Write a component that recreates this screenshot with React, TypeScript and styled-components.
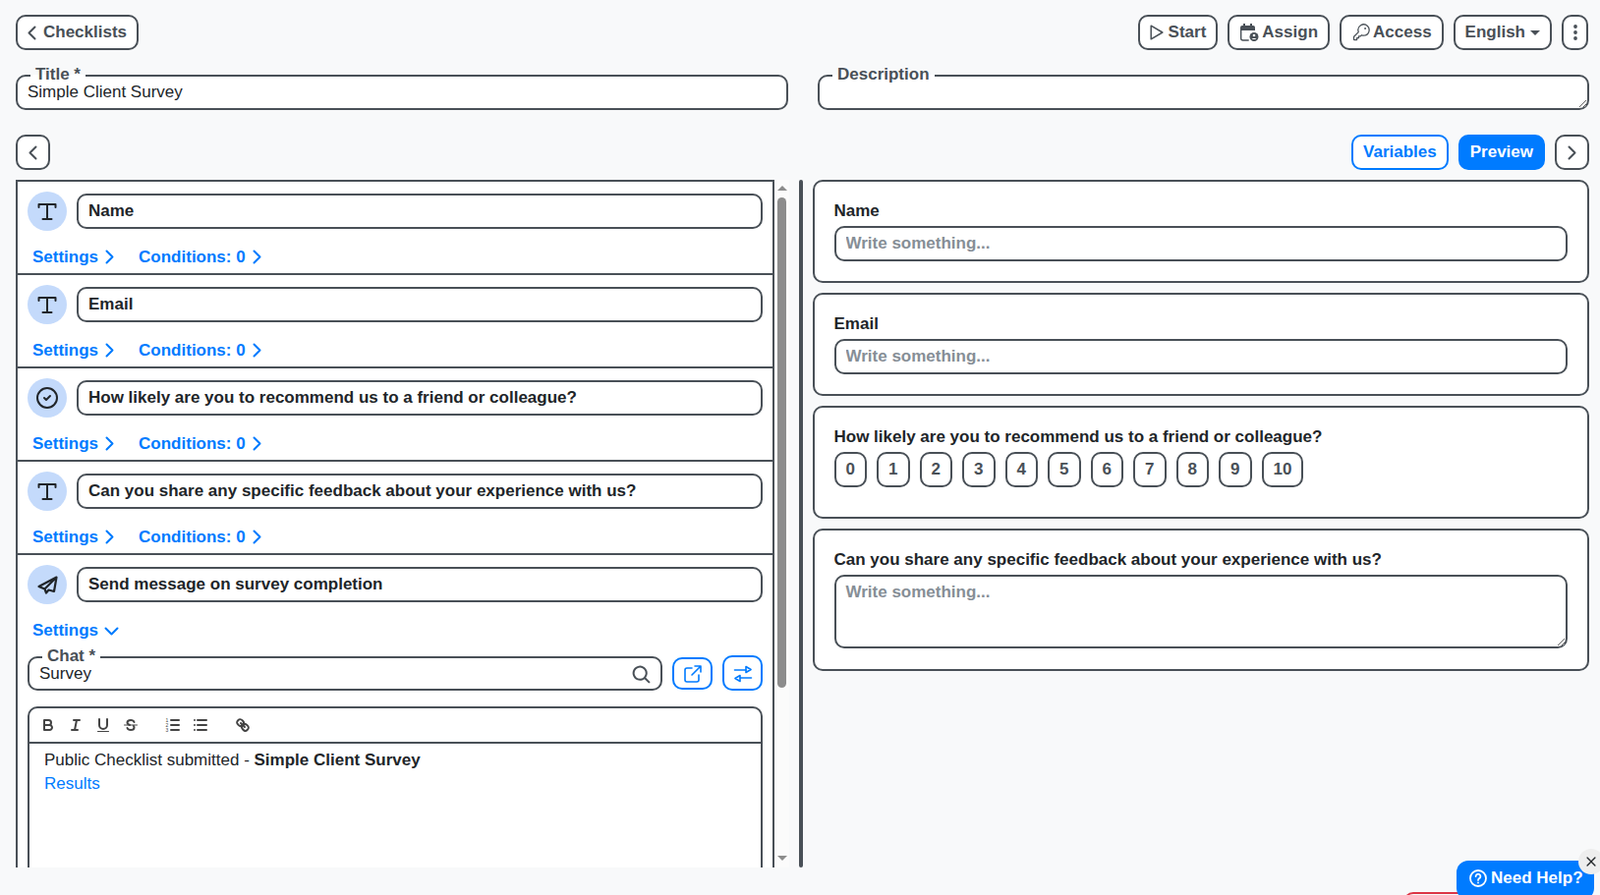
import React from 'react';
import styled, { createGlobalStyle } from 'styled-components';
import { LuCircleCheck } from 'react-icons/lu';
import { PiKey, PiMagnifyingGlassBold, PiXBold } from 'react-icons/pi';

const GRAY = '#495057';
const BLUE = '#007bff';
const INK = '#212529';

const GlobalStyle = createGlobalStyle`
  html, body { margin: 0; padding: 0; height: 100%; overflow: hidden; }
  body {
    background: #f8f9fa;
    color: ${INK};
    font-family: "Liberation Sans", Arial, sans-serif;
    font-size: 17px;
    line-height: 25.5px;
  }
  * { box-sizing: border-box; }
`;

const Page = styled.div`
  height: 911px;
  padding: 15px 11px 28px 16px;
  display: flex;
  flex-direction: column;
  overflow: hidden;
`;

const TopBar = styled.div`
  display: flex;
  justify-content: space-between;
  height: 36px;
  margin-right: 1px;
`;

const ButtonGroup = styled.div`
  display: flex;
  gap: 10px;
`;

const Button = styled.button<{ $variant?: 'outline' | 'solid' }>`
  height: 36px;
  padding: 0 10px;
  display: inline-flex;
  align-items: center;
  gap: 6px;
  border-radius: 10px;
  font: bold 17px/25.5px "Liberation Sans", Arial, sans-serif;
  white-space: nowrap;
  border: 2px solid ${(p) => (p.$variant ? BLUE : GRAY)};
  color: ${(p) => (p.$variant === 'solid' ? '#fff' : p.$variant ? BLUE : GRAY)};
  background: ${(p) => (p.$variant === 'solid' ? BLUE : '#fff')};
`;

const BackButton = styled(Button)`
  gap: 7px;
`;

const StartButton = styled(Button)`
  gap: 5px;
`;

const AccessButton = styled(Button)`
  gap: 2px;
`;

const SquareButton = styled(Button)`
  width: 35px;
  padding: 0;
  justify-content: center;
`;

const MenuButton = styled(SquareButton)`
  width: 27px;
`;

const Caret = styled.span`
  width: 0;
  height: 0;
  margin-left: -1px;
  border-left: 5px solid transparent;
  border-right: 5px solid transparent;
  border-top: 5px solid ${GRAY};
`;

const TitleRow = styled.div`
  display: grid;
  grid-template-columns: 786px 785px;
  column-gap: 30px;
  margin-top: 14px;
`;

const Field = styled.fieldset`
  margin: 0;
  padding: 0;
  min-width: 0;
  border: 2px solid ${GRAY};
  border-radius: 10px;
  background: #fff;
  height: 47px;
  display: block;
`;

const FieldLegend = styled.legend`
  margin: 0 0 -11px 13px;
  padding: 0 5px;
  height: 24px;
  font-weight: bold;
  font-size: 17px;
  line-height: 22px;
  color: ${GRAY};
`;

const FieldInput = styled.input`
  display: block;
  width: 100%;
  height: 32px;
  padding: 0 10px;
  border: 0;
  outline: 0;
  background: transparent;
  font: 17px "Liberation Sans", Arial, sans-serif;
  color: ${INK};
`;

const FieldArea = styled.textarea`
  display: block;
  width: 100%;
  height: 32px;
  min-height: 32px;
  padding: 0 10px;
  border: 0;
  outline: 0;
  border-radius: 8px;
  background: transparent;
  font: 17px "Liberation Sans", Arial, sans-serif;
`;

const ToolRow = styled.div`
  display: flex;
  justify-content: space-between;
  margin-top: 25px;
  height: 36px;
`;

const Main = styled.div`
  margin-top: 10px;
  flex: 1;
  min-height: 0;
  display: flex;
`;

const ListPane = styled.div`
  width: 787px;
  flex: none;
  height: 100%;
  display: flex;
`;

const ListClip = styled.div`
  flex: 1;
  min-width: 0;
  overflow: hidden;
`;

const ScrollRail = styled.div`
  width: 15px;
  flex: none;
  background: #fbfbfb;
  display: flex;
  flex-direction: column;
  align-items: center;
  padding: 6px 0 7px;
`;

const RailArrow = styled.div<{ $down?: boolean }>`
  width: 0;
  height: 0;
  flex: none;
  border-left: 5px solid transparent;
  border-right: 5px solid transparent;
  border-${(p) => (p.$down ? 'top' : 'bottom')}: 5px solid #8c8c8c;
  ${(p) => (p.$down ? 'margin-top: auto;' : '')}
`;

const RailThumb = styled.div`
  width: 9px;
  height: 499px;
  flex: none;
  margin-top: 7px;
  background: #8c8c8c;
  border-radius: 5px;
`;

const List = styled.div`
  border: 2px solid ${GRAY};
  background: #fff;
`;

const Row = styled.div`
  padding: 10px 10px 0;
  height: 95px;
  border-bottom: 2px solid ${GRAY};
  &:last-child {
    border-bottom: 0;
    height: auto;
    padding-bottom: 0;
  }
`;

const RowHead = styled.div`
  display: flex;
  align-items: center;
  gap: 10px;
`;

const Bubble = styled.div`
  width: 40px;
  height: 40px;
  flex: none;
  border-radius: 50%;
  background: #c4dafb;
  color: ${INK};
  display: flex;
  align-items: center;
  justify-content: center;
`;

const QuestionInput = styled.input`
  flex: 1;
  min-width: 0;
  height: 36px;
  padding: 0 10px;
  border: 2px solid ${GRAY};
  border-radius: 10px;
  background: #fff;
  outline: 0;
  font: bold 17px "Liberation Sans", Arial, sans-serif;
  color: ${INK};
`;

const LinkRow = styled.div`
  display: flex;
  gap: 25px;
  margin-top: 14px;
  padding-left: 5px;
  color: ${BLUE};
  font-weight: bold;
`;

const LinkItem = styled.span`
  display: inline-flex;
  align-items: center;
  gap: 7px;
`;

const ChatRow = styled.div`
  display: flex;
  align-items: flex-end;
  gap: 10px;
  margin-top: 2px;
`;

const ChatField = styled(Field)`
  flex: 1;
  height: 46px;
  position: relative;
`;

const SearchIcon = styled.span`
  position: absolute;
  right: 9px;
  top: 6px;
  color: ${GRAY};
  font-size: 21px;
  line-height: 1;
`;

const IconButton = styled(Button)`
  width: 41px;
  padding: 2px 0 0;
  justify-content: center;
  flex: none;
`;

const ShortIconButton = styled(IconButton)`
  height: 33px;
  margin-bottom: 1px;
  padding-top: 1px;
`;

const Editor = styled.div`
  margin: 16px 0 10px;
  border: 2px solid ${GRAY};
  border-radius: 10px;
  height: 390px;
`;

const EditorBar = styled.div`
  height: 36px;
  border-bottom: 2px solid ${GRAY};
  padding-left: 10px;
  display: flex;
  align-items: center;
`;

const EditorIcon = styled.svg<{ $gap?: number }>`
  width: 18px;
  height: 18px;
  margin-right: ${(p) => p.$gap ?? 10}px;
  fill: none;
  stroke: #444;
  stroke-width: 2;
  stroke-linecap: round;
  stroke-linejoin: round;
  flex: none;
`;

const EditorBody = styled.div`
  padding: 5px 15px;
  line-height: 24px;
  a { color: ${BLUE}; text-decoration: none; }
`;

const Divider = styled.div`
  width: 4px;
  flex: none;
  margin: 0 9.5px 0 10px;
  background: ${GRAY};
  border-radius: 2px;
`;

const Preview = styled.div`
  flex: 1;
  min-width: 0;
  display: flex;
  flex-direction: column;
  gap: 10px;
`;

const Card = styled.div<{ $pad?: number }>`
  border: 2px solid ${GRAY};
  border-radius: 10px;
  background: #fff;
  padding: 17px 20px ${(p) => p.$pad ?? 20}px;
`;

const CardLabel = styled.div`
  font-weight: bold;
  margin-bottom: 2.5px;
`;

const PreviewInput = styled.input`
  display: block;
  width: 100%;
  height: 36px;
  padding: 0 10px;
  border: 2px solid ${GRAY};
  border-radius: 10px;
  outline: 0;
  background: #fff;
  font: bold 17px "Liberation Sans", Arial, sans-serif;
  &::placeholder { color: #868e96; opacity: 1; }
`;

const PreviewArea = styled.textarea`
  display: block;
  width: 100%;
  height: 75px;
  padding: 6px 10px;
  border: 2px solid ${GRAY};
  border-radius: 10px;
  outline: 0;
  background: #fff;
  font: bold 17px "Liberation Sans", Arial, sans-serif;
  &::placeholder { color: #868e96; opacity: 1; }
`;

const Scale = styled.div`
  display: flex;
  gap: 10px;
  margin-bottom: 10px;
`;

const ScaleButton = styled(Button)`
  min-width: 33.5px;
  padding: 0 10px;
  justify-content: center;
`;

const HelpWrap = styled.div`
  position: fixed;
  left: 1482px;
  top: 876px;
  width: 140px;
  height: 40px;
  padding: 0 0 5px 13px;
  border-radius: 12px;
  background: ${BLUE};
  color: #fff;
  display: flex;
  align-items: center;
  gap: 4px;
  font: bold 17px "Liberation Sans", Arial, sans-serif;
`;

const HelpClose = styled.span`
  position: fixed;
  left: 1606px;
  top: 864px;
  width: 26px;
  height: 26px;
  border-radius: 50%;
  background: #eeeeee;
  color: ${INK};
  display: flex;
  align-items: center;
  justify-content: center;
  font-size: 14px;
`;

const RedTab = styled.div`
  position: fixed;
  left: 1428px;
  top: 908px;
  width: 70px;
  height: 20px;
  border: 2px solid #dc3545;
  border-radius: 10px;
`;

const DownSvg = styled.svg`
  margin: 2px 0 0 -1px;
`;

const AssignSvg = styled.svg`
  margin-right: -3px;
`;

const Chevron = ({ dir }: { dir: 'left' | 'right' | 'down' }) => {
  if (dir === 'down') {
    return (
      <DownSvg width="15" height="9" viewBox="0 0 15 9" fill="none" stroke="currentColor" strokeWidth="2" strokeLinecap="round" strokeLinejoin="round">
        <path d="M1.5 1.5 7.5 7.5 13.5 1.5" />
      </DownSvg>
    );
  }
  return (
    <svg width="9" height="15" viewBox="0 0 9 15" fill="none" stroke="currentColor" strokeWidth="2" strokeLinecap="round" strokeLinejoin="round">
      <path d={dir === 'left' ? 'M7.5 1.5 1.5 7.5 7.5 13.5' : 'M1.5 1.5 7.5 7.5 1.5 13.5'} />
    </svg>
  );
};

const PlayIcon = () => (
  <svg width="14" height="16" viewBox="0 0 14 16" fill="none" stroke="currentColor" strokeWidth="1.5" strokeLinejoin="round">
    <path d="M1.2 1.2 12.8 8 1.2 14.8z" />
  </svg>
);

const TextIcon = () => (
  <svg width="20" height="19" viewBox="0 0 20 19" fill="none" stroke="currentColor" strokeWidth="2" strokeLinecap="round" strokeLinejoin="round">
    <path d="M1.5 5V2H18.5V5M10 2V17M5.5 17H14.5" />
  </svg>
);

const PlaneIcon = () => (
  <svg width="21" height="19" viewBox="0 0 21 19" fill="none" stroke="currentColor" strokeWidth="2.2" strokeLinejoin="round">
    <path d="M19.5 1.5 1.5 11 7.5 13.5 9 17.5 11.5 14.5 17 16zM19.5 1.5 7.5 13.5" />
  </svg>
);

const AssignIcon = () => (
  <AssignSvg width="20" height="20" viewBox="0 0 20 20" fill="none">
    <path d="M5 1v4M12 1v4" stroke="currentColor" strokeWidth="2" />
    <path d="M1 5a2 2 0 0 1 2-2h11a2 2 0 0 1 2 2v3H1z" fill="currentColor" />
    <path d="M1.7 7v9a2 2 0 0 0 2 2h6" stroke="currentColor" strokeWidth="1.4" />
    <circle cx="15" cy="14.5" r="4.5" fill="currentColor" />
    <circle cx="15" cy="13" r="1.3" fill="#fff" />
    <path d="M12.6 17c.4-1.5 4.4-1.5 4.8 0z" fill="#fff" />
  </AssignSvg>
);

const ExternalIcon = () => (
  <svg width="20" height="20" viewBox="0 0 20 20" fill="none" stroke="currentColor" strokeWidth="1.6" strokeLinecap="round" strokeLinejoin="round">
    <path d="M9 4H4a2 2 0 0 0-2 2v10a2 2 0 0 0 2 2h10a2 2 0 0 0 2-2v-5" />
    <path d="M12 2h6v6M18 2 9 11" />
  </svg>
);

const SwapIcon = () => (
  <svg width="20" height="20" viewBox="0 0 20 20" fill="none" stroke="currentColor" strokeWidth="1.6" strokeLinejoin="round">
    <path d="M1.5 6H13M18.5 14H7" strokeLinecap="round" />
    <path d="M13 2.5 18 5.5 13 8.5z" />
    <path d="M7 11.5 2 14.5 7 17.5z" />
  </svg>
);

const KebabIcon = () => (
  <svg width="4" height="16" viewBox="0 0 4 16" fill="currentColor">
    <circle cx="2" cy="2" r="1.9" />
    <circle cx="2" cy="8" r="1.9" />
    <circle cx="2" cy="14" r="1.9" />
  </svg>
);

const HelpIcon = () => (
  <svg width="18" height="18" viewBox="0 0 18 18" fill="none" stroke="currentColor" strokeWidth="1.8" strokeLinecap="round">
    <circle cx="9" cy="9" r="8" />
    <path d="M6.6 7a2.4 2.4 0 1 1 3.6 2.1c-.8.5-1.2 1-1.2 1.8" />
    <path d="M9 13.4v.1" />
  </svg>
);

const questions = [
  { icon: <TextIcon />, text: 'Name' },
  { icon: <TextIcon />, text: 'Email' },
  { icon: <LuCircleCheck size={24} />, text: 'How likely are you to recommend us to a friend or colleague?' },
  { icon: <TextIcon />, text: 'Can you share any specific feedback about your experience with us?' },
];

function RowLinks() {
  return (
    <LinkRow>
      <LinkItem>Settings<Chevron dir="right" /></LinkItem>
      <LinkItem>Conditions: 0<Chevron dir="right" /></LinkItem>
    </LinkRow>
  );
}

function EditorToolbar() {
  return (
    <EditorBar>
      <EditorIcon viewBox="0 0 18 18">
        <path d="M5,4H9.5A2.5,2.5,0,0,1,12,6.5v0A2.5,2.5,0,0,1,9.5,9H5A0,0,0,0,1,5,9V4A0,0,0,0,1,5,4Z" />
        <path d="M5,9h5.5A2.5,2.5,0,0,1,13,11.5v0A2.5,2.5,0,0,1,10.5,14H5a0,0,0,0,1,0,0V9A0,0,0,0,1,5,9Z" />
      </EditorIcon>
      <EditorIcon viewBox="0 0 18 18">
        <path d="M7 4H13M5 14H11M8 14 10 4" />
      </EditorIcon>
      <EditorIcon viewBox="0 0 18 18">
        <path d="M5,3V9a4.012,4.012,0,0,0,4,4H9a4.012,4.012,0,0,0,4-4V3" />
        <path d="M3.5 15.5H14.5" strokeWidth="1" />
      </EditorIcon>
      <EditorIcon viewBox="0 0 18 18" $gap={25}>
        <path d="M15.5 9H2.5" strokeWidth="1" />
        <path d="M12.5 6C12 4.7 10.7 4 9 4 7 4 5.5 5 5.5 6.5 5.5 7.8 6.5 8.5 8 9" />
        <path d="M5.5 12C6 13.3 7.3 14 9 14c2 0 3.5-1 3.5-2.5 0-.6-.2-1.2-.6-1.6" />
      </EditorIcon>
      <EditorIcon viewBox="0 0 18 18">
        <path d="M7 4H15M7 9H15M7 14H15" />
        <text x="1.5" y="6" fontSize="5" stroke="none" fill="#444">1</text>
        <text x="1.5" y="11" fontSize="5" stroke="none" fill="#444">2</text>
        <text x="1.5" y="16" fontSize="5" stroke="none" fill="#444">3</text>
      </EditorIcon>
      <EditorIcon viewBox="0 0 18 18" $gap={25}>
        <path d="M6 4H15M6 9H15M6 14H15M3 4H3M3 9H3M3 14H3" />
      </EditorIcon>
      <EditorIcon viewBox="0 0 18 18">
        <path d="M7 7 11 11" />
        <path d="M8.9,4.577a3.476,3.476,0,0,1,.36,4.679A3.476,3.476,0,0,1,4.577,8.9C3.185,7.5,2.035,6.4,4.217,4.217S7.5,3.185,8.9,4.577Z" />
        <path d="M13.423,9.1a3.476,3.476,0,0,0-4.679-.36,3.476,3.476,0,0,0,.36,4.679c1.392,1.392,2.5,2.542,4.679.36S14.815,10.5,13.423,9.1Z" />
      </EditorIcon>
    </EditorBar>
  );
}

export default function App() {
  return (
    <>
      <GlobalStyle />
      <Page>
        <TopBar>
          <BackButton><Chevron dir="left" />Checklists</BackButton>
          <ButtonGroup>
            <StartButton><PlayIcon />Start</StartButton>
            <Button><AssignIcon />Assign</Button>
            <AccessButton><PiKey size={20} />Access</AccessButton>
            <Button>English<Caret /></Button>
            <MenuButton><KebabIcon /></MenuButton>
          </ButtonGroup>
        </TopBar>

        <TitleRow>
          <Field>
            <FieldLegend>Title *</FieldLegend>
            <FieldInput readOnly value="Simple Client Survey" />
          </Field>
          <Field>
            <FieldLegend>Description</FieldLegend>
            <FieldArea readOnly value="" />
          </Field>
        </TitleRow>

        <ToolRow>
          <SquareButton><Chevron dir="left" /></SquareButton>
          <ButtonGroup>
            <Button $variant="outline">Variables</Button>
            <Button $variant="solid">Preview</Button>
            <SquareButton><Chevron dir="right" /></SquareButton>
          </ButtonGroup>
        </ToolRow>

        <Main>
          <ListPane>
            <ListClip>
              <List>
                {questions.map((q) => (
                  <Row key={q.text}>
                    <RowHead>
                      <Bubble>{q.icon}</Bubble>
                      <QuestionInput readOnly value={q.text} />
                    </RowHead>
                    <RowLinks />
                  </Row>
                ))}
                <Row>
                  <RowHead>
                    <Bubble><PlaneIcon /></Bubble>
                    <QuestionInput readOnly value="Send message on survey completion" />
                  </RowHead>
                  <LinkRow>
                    <LinkItem>Settings<Chevron dir="down" /></LinkItem>
                  </LinkRow>
                  <ChatRow>
                    <ChatField>
                      <FieldLegend>Chat *</FieldLegend>
                      <FieldInput readOnly value="Survey" />
                      <SearchIcon><PiMagnifyingGlassBold /></SearchIcon>
                    </ChatField>
                    <ShortIconButton $variant="outline"><ExternalIcon /></ShortIconButton>
                    <IconButton $variant="outline"><SwapIcon /></IconButton>
                  </ChatRow>
                  <Editor>
                    <EditorToolbar />
                    <EditorBody>
                      <div>Public Checklist submitted - <b>Simple Client Survey</b></div>
                      <a href="#results">Results</a>
                    </EditorBody>
                  </Editor>
                </Row>
              </List>
            </ListClip>
            <ScrollRail>
              <RailArrow />
              <RailThumb />
              <RailArrow $down />
            </ScrollRail>
          </ListPane>

          <Divider />

          <Preview>
            <Card>
              <CardLabel>Name</CardLabel>
              <PreviewInput placeholder="Write something..." />
            </Card>
            <Card>
              <CardLabel>Email</CardLabel>
              <PreviewInput placeholder="Write something..." />
            </Card>
            <Card>
              <CardLabel>How likely are you to recommend us to a friend or colleague?</CardLabel>
              <Scale>
                {[0, 1, 2, 3, 4, 5, 6, 7, 8, 9, 10].map((n) => (
                  <ScaleButton key={n}>{n}</ScaleButton>
                ))}
              </Scale>
            </Card>
            <Card $pad={21}>
              <CardLabel>Can you share any specific feedback about your experience with us?</CardLabel>
              <PreviewArea placeholder="Write something..." />
            </Card>
          </Preview>
        </Main>

        <RedTab />
        <HelpWrap><HelpIcon />Need Help?</HelpWrap>
        <HelpClose><PiXBold /></HelpClose>
      </Page>
    </>
  );
}
